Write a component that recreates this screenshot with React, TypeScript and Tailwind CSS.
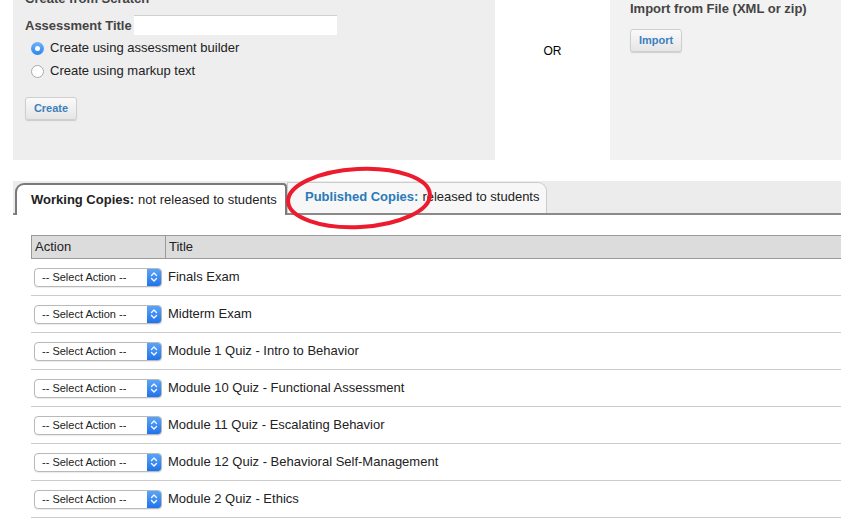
import React from "react";

const rows = [
  "Finals Exam",
  "Midterm Exam",
  "Module 1 Quiz - Intro to Behavior",
  "Module 10 Quiz - Functional Assessment",
  "Module 11 Quiz - Escalating Behavior",
  "Module 12 Quiz - Behavioral Self-Management",
  "Module 2 Quiz - Ethics",
];

function SelectBox() {
  return (
    <div className="flex h-[19px] w-[128px] items-stretch rounded-[4px] border border-[#b9b9b9] bg-white shadow-[0_1px_1px_rgba(0,0,0,0.08)] overflow-hidden">
      <div className="flex flex-1 items-center pl-[7px] text-[11px] text-[#222]">-- Select Action --</div>
      <div className="flex w-[14px] items-center justify-center bg-gradient-to-b from-[#5aa4f7] to-[#1f73eb]">
        <svg width="8" height="12" viewBox="0 0 8 12">
          <path d="M1.5 4.5 L4 2 L6.5 4.5" stroke="white" strokeWidth="1.3" fill="none" strokeLinecap="round" strokeLinejoin="round" />
          <path d="M1.5 7.5 L4 10 L6.5 7.5" stroke="white" strokeWidth="1.3" fill="none" strokeLinecap="round" strokeLinejoin="round" />
        </svg>
      </div>
    </div>
  );
}

function Btn({ label }: { label: string }) {
  return (
    <div className="flex h-[23px] w-[52px] items-center justify-center rounded-[3px] border border-[#cfcfcf] bg-gradient-to-b from-[#fafafa] to-[#e6e6e6] shadow-[0_1px_1px_rgba(0,0,0,0.15)] text-[11px] font-bold text-[#3f7fbf]">
      {label}
    </div>
  );
}

export default function App() {
  return (
    <div
      className="relative h-[524px] w-[841px] overflow-hidden bg-white text-[13px] text-[#222]"
      style={{ fontFamily: '"Liberation Sans", Arial, sans-serif' }}
    >
      {/* Top section */}
      <div className="flex h-[160px]">
        <div className="ml-[13px] w-[482px] bg-[#eeeeee] pl-[12px]">
          <div className="mt-[-9px] h-[16px] text-[13px] font-bold leading-[16px] text-[#444]">Create from Scratch</div>
          <div className="mt-[8px] flex h-[20px] items-center pt-[2px]">
            <span className="text-[13px] font-bold text-[#444]">Assessment Title</span>
            <div className="ml-[2px] mt-[-2px] h-[20px] w-[203px] border-t border-[#d0d0d0] bg-white" />
          </div>
          <div className="mt-[3px] flex flex-col gap-[3px] pl-[6px]">
            <div className="flex h-[20px] items-center gap-[6px]">
              <div className="flex h-[13px] w-[13px] items-center justify-center rounded-full bg-gradient-to-b from-[#6cb3fa] to-[#2a84f0]">
                <div className="h-[5px] w-[5px] rounded-full bg-white" />
              </div>
              <span>Create using assessment builder</span>
            </div>
            <div className="flex h-[20px] items-center gap-[6px]">
              <div className="h-[13px] w-[13px] rounded-full border border-[#a9a9a9] bg-white" />
              <span>Create using markup text</span>
            </div>
          </div>
          <div className="mt-[16px]">
            <Btn label="Create" />
          </div>
        </div>
        <div className="flex w-[115px] items-start justify-center pt-[42px] text-[12px] text-black">OR</div>
        <div className="flex-1 bg-[#f2f2f2] pl-[20px]">
          <div className="mt-[1px] text-[13px] font-bold leading-[16px] text-[#444]">Import from File (XML or zip)</div>
          <div className="mt-[12px]">
            <Btn label="Import" />
          </div>
        </div>
      </div>

      {/* Tabs */}
      <div className="relative ml-[13px] mt-[21px] flex h-[34px] items-end border-b-2 border-[#8a8a8a] bg-[#ececec] pl-[2px]">
        <div className="mb-[-2px] flex h-[32px] w-[272px] items-center rounded-tl-[9px] rounded-tr-[4px] border-2 border-b-0 border-[#7a7a7a] bg-white pl-[14px] text-[13px]">
          <span className="font-bold">Working Copies:</span>
          <span className="ml-[4px]">not released to students</span>
        </div>
        <div className="mb-0 flex h-[31px] w-[260px] items-center rounded-tr-[9px] border border-b-0 border-[#cccccc] bg-[#f7f7f7] pb-[2px] pl-[17px] text-[13px]">
          <span className="font-bold text-[#2a7ab8]">Published Copies:</span>
          <span className="ml-[4px]">released to students</span>
        </div>
      </div>

      {/* Table */}
      <div className="ml-[31px] mt-[20px] w-[820px]">
        <div className="flex h-[24px] border border-[#9a9a9a] bg-[#dcdcdc] text-[13px]">
          <div className="flex w-[134px] items-center border-r border-[#9a9a9a] pl-[3px]">Action</div>
          <div className="flex items-center pl-[3px]">Title</div>
        </div>
        {rows.map((r) => (
          <div key={r} className="flex h-[37px] items-center border-b border-[#cccccc] pl-[3px]">
            <SelectBox />
            <span className="ml-[6px] text-[13px]">{r}</span>
          </div>
        ))}
      </div>

      {/* Red annotation ellipse */}
      <svg className="pointer-events-none absolute left-[280px] top-[161px]" width="160" height="76" viewBox="0 0 160 76">
        <ellipse cx="79" cy="37" rx="71" ry="29" fill="none" stroke="#ec1c2e" strokeWidth="4" transform="rotate(-3 79 37)" />
      </svg>
    </div>
  );
}
